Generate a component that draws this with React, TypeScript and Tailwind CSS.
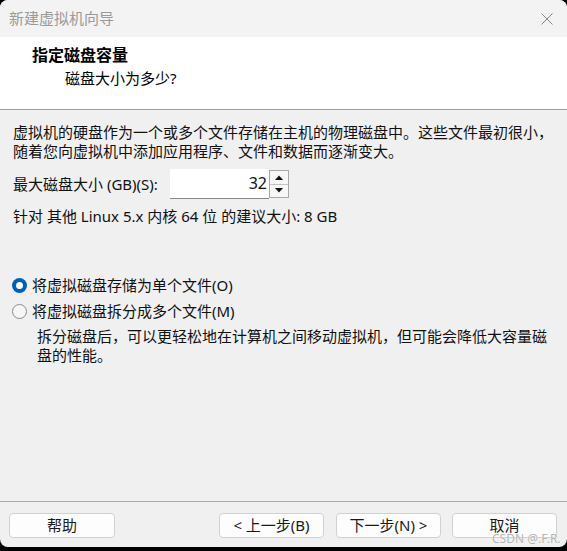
import React from "react";

const font = { fontFamily: '"Noto Sans", "Noto Sans CJK SC", sans-serif' };

function WinButton({ children, className = "" }: { children: React.ReactNode; className?: string }) {
  return (
    <div
      className={`h-[25px] w-[105px] rounded-[4px] border border-[#d1d1d1] bg-[#fdfdfd] flex items-center justify-center text-[15px] leading-none text-[#1a1a1a] ${className}`}
    >
      {children}
    </div>
  );
}

function Radio({ checked, label }: { checked?: boolean; label: string }) {
  return (
    <div className="flex items-center h-[19px] -ml-[1px]">
      {checked ? (
        <span className="w-[15px] h-[15px] rounded-full bg-[#005fb8] flex items-center justify-center">
          <span className="w-[7px] h-[7px] rounded-full bg-white" />
        </span>
      ) : (
        <span className="w-[15px] h-[15px] rounded-full border border-[#8b8b8b] bg-[#f6f6f6]" />
      )}
      <span className="ml-[5px]">{label}</span>
    </div>
  );
}

export default function App() {
  return (
    <div className="w-[567px] h-[551px] bg-black" style={font}>
      <div className="relative h-[547px] rounded-[8px] overflow-hidden bg-[#f0f0f0] flex flex-col text-[15px] text-[#111]">
        {/* title bar */}
        <div className="h-[37px] bg-[#f3f3f3] flex items-center justify-between pl-[9px] pr-[14px]">
          <span className="text-[15px] text-[#9a9a9a] leading-none">新建虚拟机向导</span>
          <svg width="12" height="12" viewBox="0 0 12 12" className="mt-[1px]">
            <path d="M0.5 0.5 L11.5 11.5 M11.5 0.5 L0.5 11.5" stroke="#8a8a8a" strokeWidth="1" fill="none" />
          </svg>
        </div>

        {/* header */}
        <div className="h-[73px] bg-white border-b border-[#a0a0a0] pl-[32px] pt-[8px]">
          <div className="text-[16px] font-bold leading-[20px] text-black">指定磁盘容量</div>
          <div className="mt-[3px] pl-[33px] leading-[20px] text-black">磁盘大小为多少?</div>
        </div>

        {/* body */}
        <div className="flex-1 px-[13px] pt-[13px] leading-[19px]">
          <p>
            虚拟机的硬盘作为一个或多个文件存储在主机的物理磁盘中。这些文件最初很小，
            <br />
            随着您向虚拟机中添加应用程序、文件和数据而逐渐变大。
          </p>

          <div className="mt-[8px] h-[30px] flex items-center">
            <span className="w-[157px]">最大磁盘大小 (GB)(S):</span>
            <div className="flex h-[30px]">
              <div className="w-[99px] h-[30px] bg-white border-b border-[#8a8a8a] flex items-center justify-end pr-[2px] text-[16px]">
                32
              </div>
              <div className="w-[20px] h-[28px] mt-[1px] border border-[#a7a7a7] flex flex-col bg-[#f7f7f7]">
                <div className="flex-1 flex items-center justify-center border-b border-[#c4c4c4]">
                  <svg width="8" height="5" viewBox="0 0 8 5">
                    <path d="M0 5 L4 0.5 L8 5 Z" fill="#111" />
                  </svg>
                </div>
                <div className="flex-1 flex items-center justify-center">
                  <svg width="8" height="5" viewBox="0 0 8 5">
                    <path d="M0 0 L8 0 L4 4.5 Z" fill="#111" />
                  </svg>
                </div>
              </div>
            </div>
          </div>

          <p className="mt-[8px]">针对 其他 Linux 5.x 内核 64 位 的建议大小: 8 GB</p>

          <div className="mt-[50px]">
            <Radio checked label="将虚拟磁盘存储为单个文件(O)" />
          </div>
          <div className="mt-[7px]">
            <Radio label="将虚拟磁盘拆分成多个文件(M)" />
          </div>
          <p className="mt-[6px] pl-[24px]">
            拆分磁盘后，可以更轻松地在计算机之间移动虚拟机，但可能会降低大容量磁
            <br />
            盘的性能。
          </p>
        </div>

        {/* footer */}
        <div className="h-[46px] border-t border-[#a9a9a9] flex items-start pt-[11px] pl-[9px] pr-[10px]">
          <WinButton className="w-[106px]">帮助</WinButton>
          <WinButton className="ml-auto">&lt; 上一步(B)</WinButton>
          <WinButton className="ml-[12px]">下一步(N) &gt;</WinButton>
          <WinButton className="ml-[11px]">取消</WinButton>
        </div>

        <span
          className="absolute left-[492px] top-[533px] text-[12px] leading-none text-[#b4b4b4]"
          style={{ textShadow: "0 0 1px #fff" }}
        >
          CSDN @.F.R.
        </span>
      </div>
    </div>
  );
}
